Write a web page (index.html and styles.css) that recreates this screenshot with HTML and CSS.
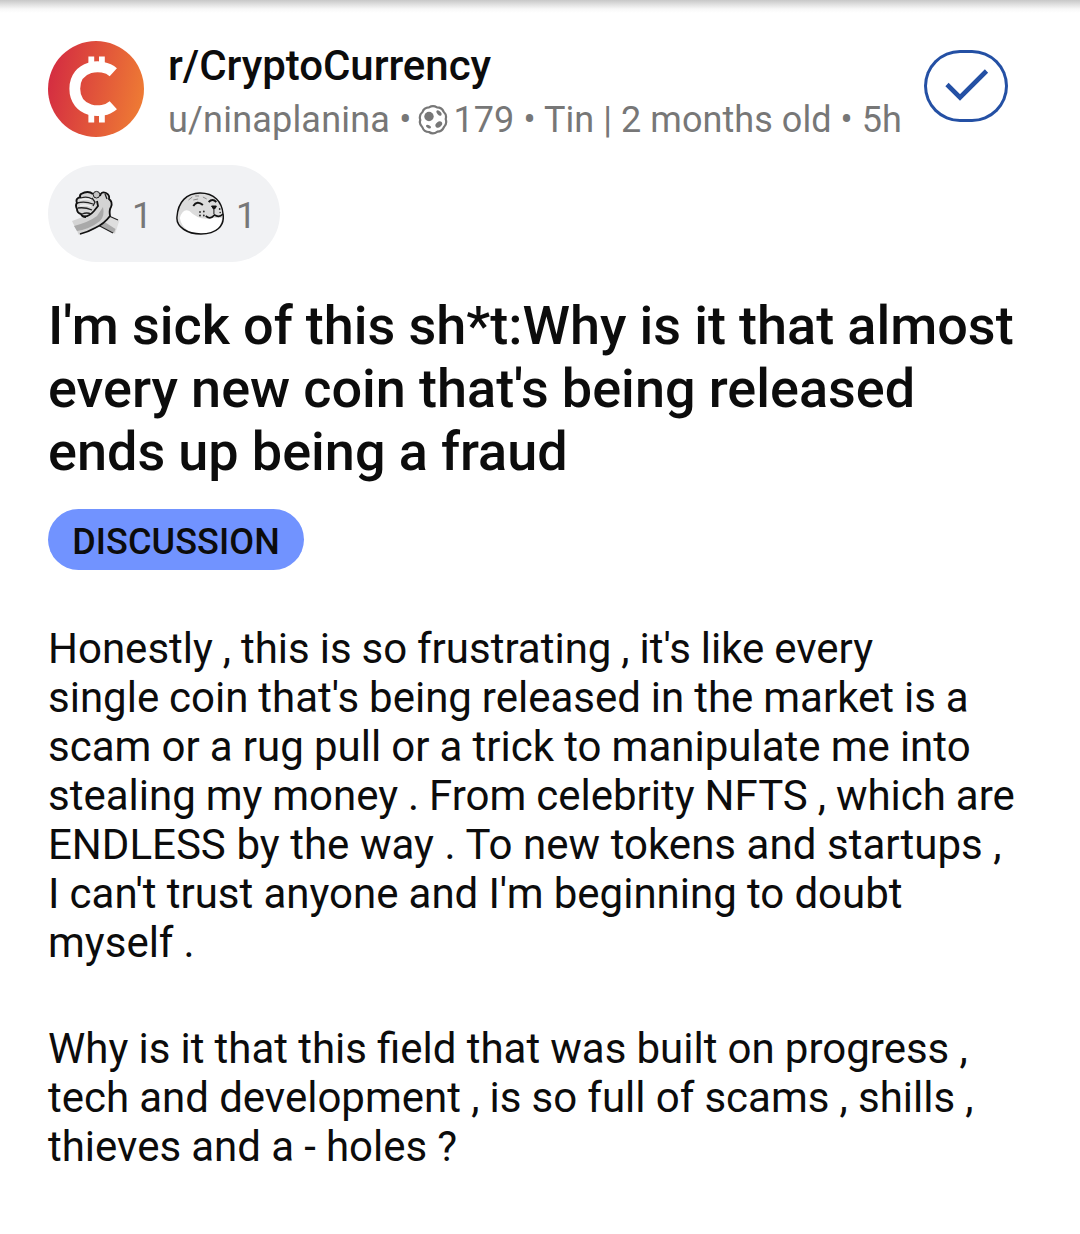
FILE: index.html
```html
<!DOCTYPE html>
<html lang="en">
<head>
<meta charset="utf-8">
<title>r/CryptoCurrency</title>
<link rel="stylesheet" href="styles.css">
</head>
<body>
<main class="post">
  <header class="header">
    <svg class="avatar" viewBox="0 0 96 96" aria-hidden="true">
      <defs><linearGradient id="coin" x1="0" y1=".4" x2="1" y2=".6"><stop offset="0" stop-color="#d42d41"/><stop offset="1" stop-color="#ee7b34"/></linearGradient></defs>
      <circle cx="48" cy="48" r="48" fill="url(#coin)"/>
      <path d="M65.300 31.200C54 21 26.800 24.500 26.800 47.700C26.800 71 54 74.500 65.300 64.200" fill="none" stroke="#fff" stroke-width="10.800"/>
      <path d="M40.400 15.500h5.800v11h-5.800zM51 15.500h5.800v11H51zM40.400 70h5.800v11.500h-5.800zM51 70h5.800v11.500H51z" fill="#fff"/>
    </svg>
    <div class="byline">
      <div class="community">r/CryptoCurrency</div>
      <div class="meta">
        <span class="user">u/ninaplanina •</span>
        <svg class="moon" viewBox="0 0 30 30" aria-hidden="true">
          <path d="M11 2.400Q15 0 19 2.400Q24 2.500 25.500 6.500Q29 10 27.700 14Q29.300 19 26 22Q24 26.500 19.500 26.600Q15 30 11 27Q6 27 4.500 22.500Q.7 19 2.300 15Q.7 10 4.500 7Q6 2.500 11 2.400Z" fill="none" stroke="#777" stroke-width="2.200"/>
          <g fill="#777"><circle cx="11" cy="11.500" r="4.700"/><ellipse cx="20.800" cy="19.500" rx="3.700" ry="2.700" transform="rotate(-40 20.800 19.500)"/><ellipse cx="21" cy="8" rx="3.200" ry="1.800" transform="rotate(48 21 8)"/><ellipse cx="10.500" cy="21.700" rx="2.700" ry="1.500" transform="rotate(25 10.500 21.700)"/></g>
        </svg>
        <span class="details">179 • Tin | 2 months old • 5h</span>
      </div>
    </div>
    <div class="joined">
      <svg viewBox="0 0 84 72" aria-hidden="true"><path d="M23 34.500 36 47.500 62.500 21" fill="none" stroke="#2450a4" stroke-width="4.600"/></svg>
    </div>
  </header>

  <div class="awards">
    <svg class="award" viewBox="0 0 48 48" aria-hidden="true">
      <path d="M35 26 47.500 30 43 44 22 34Z" fill="#dedede"/>
      <path d="M25 34 42 43 43.500 39 31 31Z" fill="#aaa"/>
      <path d="M24 34 41 43M37 26 46 30" stroke="#222" stroke-width="1.200"/>
      <path d="M10 4Q16 1 22 4L29 8 27 20Q20 28 12 27Q4 24 4 16Q3 7 10 4Z" fill="#d6d6d6"/>
      <path d="M28 6Q29 1 34 3Q38 5 37 9Q41 12 39 17Q37 20 38 26Q35 32 29 35Q19 42 7 45L0 31Q12 27 21 22Z" fill="#d4d4d4"/>
      <path d="M2 36Q17 32 25 26L31 17Q33 26 28 31Q18 39 5 41Z" fill="#a9a9a9"/>
      <path d="M10 26Q16 28 22 21L26 16 25 11M28 6Q29 1 34 3Q38 5 37 9Q41 12 39 17Q37 20 38 26Q32 34 23 38Q16 42 8 44" fill="none" stroke="#111" stroke-width="1.800"/>
      <path d="M21 4Q16 0 9 4Q7 6 9 8M9 7Q3 8 5 13Q3 15 5 19Q5 23 9 24Q10 27 14 27" fill="none" stroke="#111" stroke-width="1.900"/>
      <path d="M9 8Q15 6 20 9M5 13Q13 11 21 14M6 18Q13 17 20 20M10 24Q15 22 19 24M20 8l3 4-2 4M33 4l2 5" fill="none" stroke="#222" stroke-width="1.300"/>
      <path d="M8 10Q14 8 19 10M8 15.500Q14 14 19 16.500" fill="none" stroke="#f1f1f1" stroke-width="1.500"/>
      <circle cx="24.500" cy="4.700" r="3.300" fill="#c4c4c4" stroke="#222"/>
    </svg>
    <span class="count">1</span>
    <svg class="award seal" viewBox="0 0 50 48" preserveAspectRatio="none" aria-hidden="true">
      <path d="M1 27C2 12 11 3 25 3C40 3 48 12 49 24C51 36 42 44 26 44C12 44 0 37 1 27Z" fill="#dcdcdc"/>
      <path d="M4 28Q7 18 14 21Q24 31 37 28L48 28Q46 44 26 44Q7 43 4 28Z" fill="#fff"/>
      <path d="M1 27C2 12 11 3 25 3C40 3 48 12 49 24C51 36 42 44 26 44C12 44 0 37 1 27Z" fill="none" stroke="#111" stroke-width="1.500"/>
      <path d="M18 16Q22 10 28 15M34 12Q38 8 42 12" fill="none" stroke="#111" stroke-width="2"/>
      <path d="M37 16h5q-.5 3-3 3zM39.500 18v6" fill="#111" stroke="#111"/>
      <path d="M31 26Q36 30 40 25Q45 28 49 24" fill="none" stroke="#111" stroke-width="1.700"/>
      <path d="M13 10 17 7M20 6l4 0M28 7l4 2M18 10l5-1" stroke="#888"/>
      <g fill="#222"><circle cx="25" cy="22" r=".9"/><circle cx="29" cy="21.500" r=".9"/><circle cx="25" cy="25.500" r=".9"/><circle cx="29" cy="25.500" r=".9"/><circle cx="45.500" cy="19" r=".9"/><circle cx="46" cy="22.500" r=".8"/></g>
    </svg>
    <span class="count">1</span>
  </div>

  <h1 class="title">I'm sick of this sh*t:Why is it that almost<br>every new coin that's being released<br>ends up being a fraud</h1>
  <div class="flair">DISCUSSION</div>

  <div class="body">
    <p><span class="tight">Honestly , this is so frustrating , it's like every<br>single coin that's being released in the market is a</span><br>scam or a rug pull or a trick to manipulate me into<br><span class="tight">stealing my money . From celebrity NFTS , which are</span><br><span class="loose">ENDLESS by the way . To new tokens and startups ,</span><br>I can't trust anyone and I'm beginning to doubt<br>myself .</p>
    <p>Why is it that this field that was built on progress ,<br>tech and development , is so full of scams , shills ,<br>thieves and a - holes ?</p>
  </div>
</main>
</body>
</html>
```
FILE: styles.css
```css
* { box-sizing: border-box; }
body {
  margin: 0;
  background: #fff;
  color: #0c0c0c;
  font-family: Roboto, sans-serif;
  white-space: nowrap;
}
.post {
  min-height: 1234px;
  padding: 41px 48px 0;
  background: linear-gradient(#c8c8c8, #e3e3e3 5px, #f8f8f8 9px, #fff 13px) no-repeat;
  background-size: 100% 13px;
}
.header { display: flex; height: 96px; }
.avatar { width: 96px; height: 96px; flex: none; }
.byline { width: 756px; margin-left: 24px; flex: none; }
.community { font-size: 42px; font-weight: 500; line-height: 49px; letter-spacing: -.05px; }
.meta {
  display: flex;
  align-items: center;
  margin-top: 8px;
  color: #777;
  font-size: 36px;
  line-height: 44px;
}
.user { letter-spacing: .2px; }
.details { letter-spacing: .06px; }
.moon { width: 30px; height: 30px; margin: 0 6px; flex: none; }
.joined {
  width: 84px;
  height: 72px;
  margin-top: 9px;
  flex: none;
  border-radius: 36px;
  box-shadow: inset 0 0 0 3px #2450a4;
}
.joined svg { display: block; width: 84px; height: 72px; }
.awards {
  display: flex;
  align-items: center;
  width: 232px;
  height: 97px;
  margin-top: 28px;
  padding-left: 24px;
  border-radius: 49px;
  background: #f1f2f4;
}
.award { width: 48px; height: 48px; flex: none; }
.award.seal { margin-left: 24px; }
.count {
  width: 20px;
  margin: 4px 0 0 12px;
  color: #777;
  font-size: 36px;
  line-height: 42px;
}
.title {
  margin: 32px 0 0;
  font-size: 54px;
  font-weight: 500;
  line-height: 63px;
  word-spacing: -.3px;
}
.flair {
  width: 256px;
  height: 61px;
  margin-top: 26px;
  border-radius: 31px;
  background: #7193ff;
  font-size: 36px;
  font-weight: 500;
  line-height: 66px;
  letter-spacing: .1px;
  text-align: center;
}
.body { margin-top: 54px; font-size: 42px; line-height: 49px; word-spacing: -.27px; }
.body p { margin: 0 0 57px; }
.tight { word-spacing: -.5px; }
.loose { word-spacing: .2px; }
```
